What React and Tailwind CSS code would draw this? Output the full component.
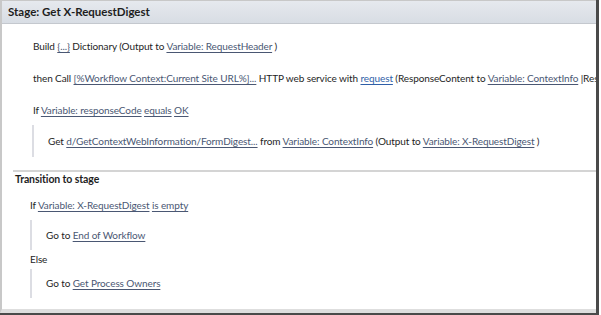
const L = ({children, blue}) => (
    <span className={`underline underline-offset-2 decoration-1 ${blue ? 'text-[#2f5fa8]' : 'text-[#4a5773]'}`}>{children}</span>
);

const Step = ({children, className = ''}) => (
    <div className={`whitespace-nowrap ${className}`}>{children}</div>
);

const Block = ({children, className = ''}) => (
    <div className={`border-l-2 border-[#dcdde3] ${className}`}>{children}</div>
);

export default function App() {
    return (
        <div className="w-[601px] h-[315px] bg-white text-[10px] tracking-[-0.1px] text-[#1e1e1e] overflow-hidden" style={{fontFamily: 'Lato, "Open Sans", sans-serif'}}>
            <div className="w-[599px] border-r-[3px] border-b-[3px] border-[#4a4a4a]">
                <div className="border-t border-l-2 border-[#c8c8c8] border-b-4 border-b-[#dedede] overflow-hidden">
                    <div className="h-[23px] bg-gradient-to-b from-[#e6e9ee] to-[#d8dde4] border-b border-[#c4c8ce] flex items-center pl-[6px] font-bold text-[11.5px] tracking-normal">
                        Stage: Get X-RequestDigest
                    </div>
                    <div className="pl-[31px] pt-[15px] flex flex-col">
                        <Step className="h-[32px]">Build <L>{'{...}'}</L> Dictionary (Output to <L>Variable: RequestHeader</L> )</Step>
                        <Step className="h-[32px]">then Call <L>[%Workflow Context:Current Site URL%]...</L> HTTP web service with <L blue>request</L> (ResponseContent to <L>Variable: ContextInfo</L> |ResponseHeaders to <L>Variable: responseHeaders</L>)</Step>
                        <Step className="h-[22px]">If <L>Variable: responseCode</L> <L>equals</L> <L>OK</L></Step>
                        <Block className="h-[32px] flex items-center pl-[14px] ml-[-1px]">
                            <Step>Get <L>d/GetContextWebInformation/FormDigest...</L> from <L>Variable: ContextInfo</L> (Output to <L>Variable: X-RequestDigest</L> )</Step>
                        </Block>
                    </div>
                    <div className="mt-[13px] ml-[11px] border-t-2 border-[#d4d4d4]"></div>
                    <div className="pl-[13px] font-bold h-[21px] text-[10.5px]">Transition to stage</div>
                    <div className="pl-[28px] pt-[5px] flex flex-col">
                        <Step className="h-[22px]">If <L>Variable: X-RequestDigest</L> <L>is empty</L></Step>
                        <Block className="h-[30px] flex items-center pl-[14px]">
                            <Step>Go to <L>End of Workflow</L></Step>
                        </Block>
                        <Step className="h-[19px] flex items-center">Else</Step>
                        <Block className="h-[29px] flex items-center pl-[14px]">
                            <Step>Go to <L>Get Process Owners</L></Step>
                        </Block>
                    </div>
                    <div className="h-[11px]"></div>
                </div>
            </div>
        </div>
    );
}
